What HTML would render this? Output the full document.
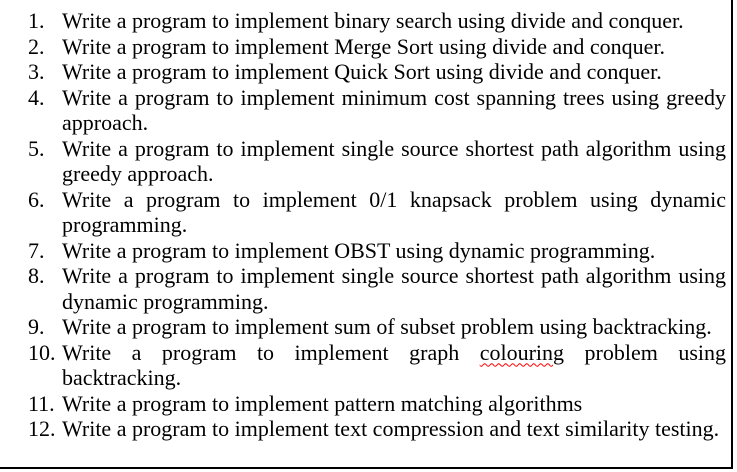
<!DOCTYPE html>
<html><head><style>
html,body{margin:0;padding:0;background:#fff;width:737px;height:472px;overflow:hidden;position:relative}
.box{position:absolute;left:0;top:0;width:731px;height:467px;border-right:2px solid #000;border-bottom:2px solid #000}
.list{position:absolute;left:28px;top:8px;width:698px;font-family:"Liberation Serif",serif;font-size:22px;line-height:25.5px;color:#000}
.it{position:relative;padding-left:34px;text-align:justify}
.n{position:absolute;left:0;top:0}
.sq{text-decoration:underline wavy red;text-decoration-thickness:1px;text-underline-offset:3px}
</style></head><body>
<div class="box"></div>
<div class="list">
<div class="it"><span class="n">1.</span>Write a program to implement binary search using divide and conquer.</div>
<div class="it"><span class="n">2.</span>Write a program to implement Merge Sort using divide and conquer.</div>
<div class="it"><span class="n">3.</span>Write a program to implement Quick Sort using divide and conquer.</div>
<div class="it"><span class="n">4.</span>Write a program to implement minimum cost spanning trees using greedy approach.</div>
<div class="it"><span class="n">5.</span>Write a program to implement single source shortest path algorithm using greedy approach.</div>
<div class="it"><span class="n">6.</span>Write a program to implement 0/1 knapsack problem using dynamic programming.</div>
<div class="it"><span class="n">7.</span>Write a program to implement OBST using dynamic programming.</div>
<div class="it"><span class="n">8.</span>Write a program to implement single source shortest path algorithm using dynamic programming.</div>
<div class="it"><span class="n">9.</span>Write a program to implement sum of subset problem using backtracking.</div>
<div class="it"><span class="n">10.</span>Write a program to implement graph <span class="sq">colouring</span> problem using backtracking.</div>
<div class="it"><span class="n">11.</span>Write a program to implement pattern matching algorithms</div>
<div class="it"><span class="n">12.</span>Write a program to implement text compression and text similarity testing.</div>
</div>
</body></html>
